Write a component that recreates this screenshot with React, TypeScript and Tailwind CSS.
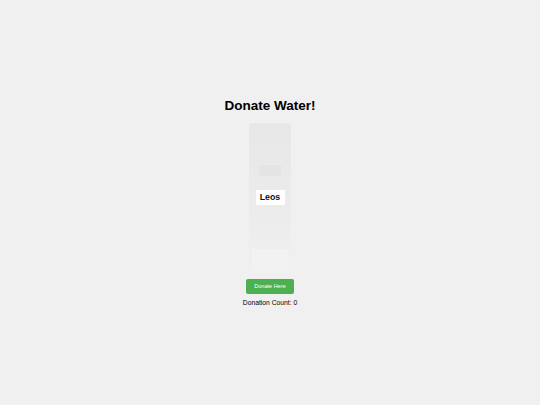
import React, { useState } from 'react';

export default function App() {
  const [count, setCount] = useState(0);

  return (
    <div className="flex min-h-screen flex-col items-center justify-center bg-[#f0f0f0] font-['Liberation_Sans',Arial,sans-serif] text-black">
      <h1 className="text-[13.5px] font-bold leading-[16px]">Donate Water!</h1>

      <div className="mt-[9px] flex h-[150px] w-[42px] flex-col items-center rounded-[4px] bg-gradient-to-b from-[#e7e7e7] via-[#ebebeb] to-[#f0f0f0]">
        <div className="mt-[42px] h-[11px] w-[22px] bg-[#e4e4e4]" />
        <div className="mt-[14px] flex h-[15px] w-[29px] items-center justify-center rounded-[1px] bg-white text-[8.8px] font-bold leading-none text-[#111]">
          Leos
        </div>
        <div className="mt-auto h-[24px] w-[37px] bg-[#f2f2f2]" />
      </div>

      <button
        className="mt-[6px] flex h-[15px] w-[48px] items-center justify-center rounded-[2px] bg-[#4caf50] text-[5.6px] leading-none text-white"
        onClick={() => setCount(count + 1)}
      >
        Donate Here
      </button>

      <p className="mt-[5px] text-[6.75px] leading-[8px]">Donation Count: {count}</p>
    </div>
  );
}
